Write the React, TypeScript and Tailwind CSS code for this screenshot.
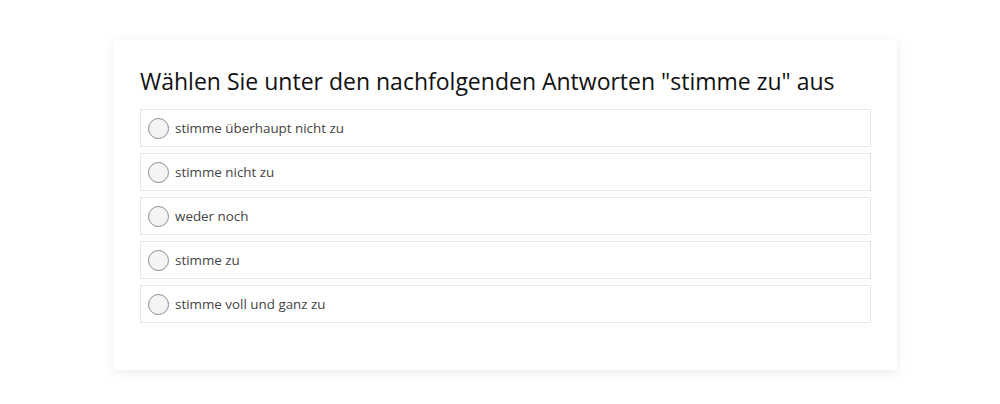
import React from "react";

const options = [
  "stimme überhaupt nicht zu",
  "stimme nicht zu",
  "weder noch",
  "stimme zu",
  "stimme voll und ganz zu",
];

export default function App() {
  return (
    <div className="w-[1000px] h-[404px] bg-white pt-[40px] pl-[114px]" style={{ fontFamily: '"Open Sans", sans-serif' }}>
      <div className="w-[783px] bg-white shadow-[0_2px_10px_rgba(0,0,0,0.08)] px-[26px] pt-[23px] pb-[47px]">
        <h1 className="text-[23px] leading-[36px] text-[#111] mb-[10px]">
          Wählen Sie unter den nachfolgenden Antworten "stimme zu" aus
        </h1>
        <div className="flex flex-col gap-[6px]">
          {options.map((o) => (
            <label key={o} className="flex items-center h-[38px] border border-[#e6e6e6] pl-[7px]">
              <span className="w-[21px] h-[21px] rounded-full border border-[#8c8c8c] bg-[#f4f4f4] mr-[6px] shrink-0" />
              <span className="text-[13.4px] text-[#444]">{o}</span>
            </label>
          ))}
        </div>
      </div>
    </div>
  );
}
